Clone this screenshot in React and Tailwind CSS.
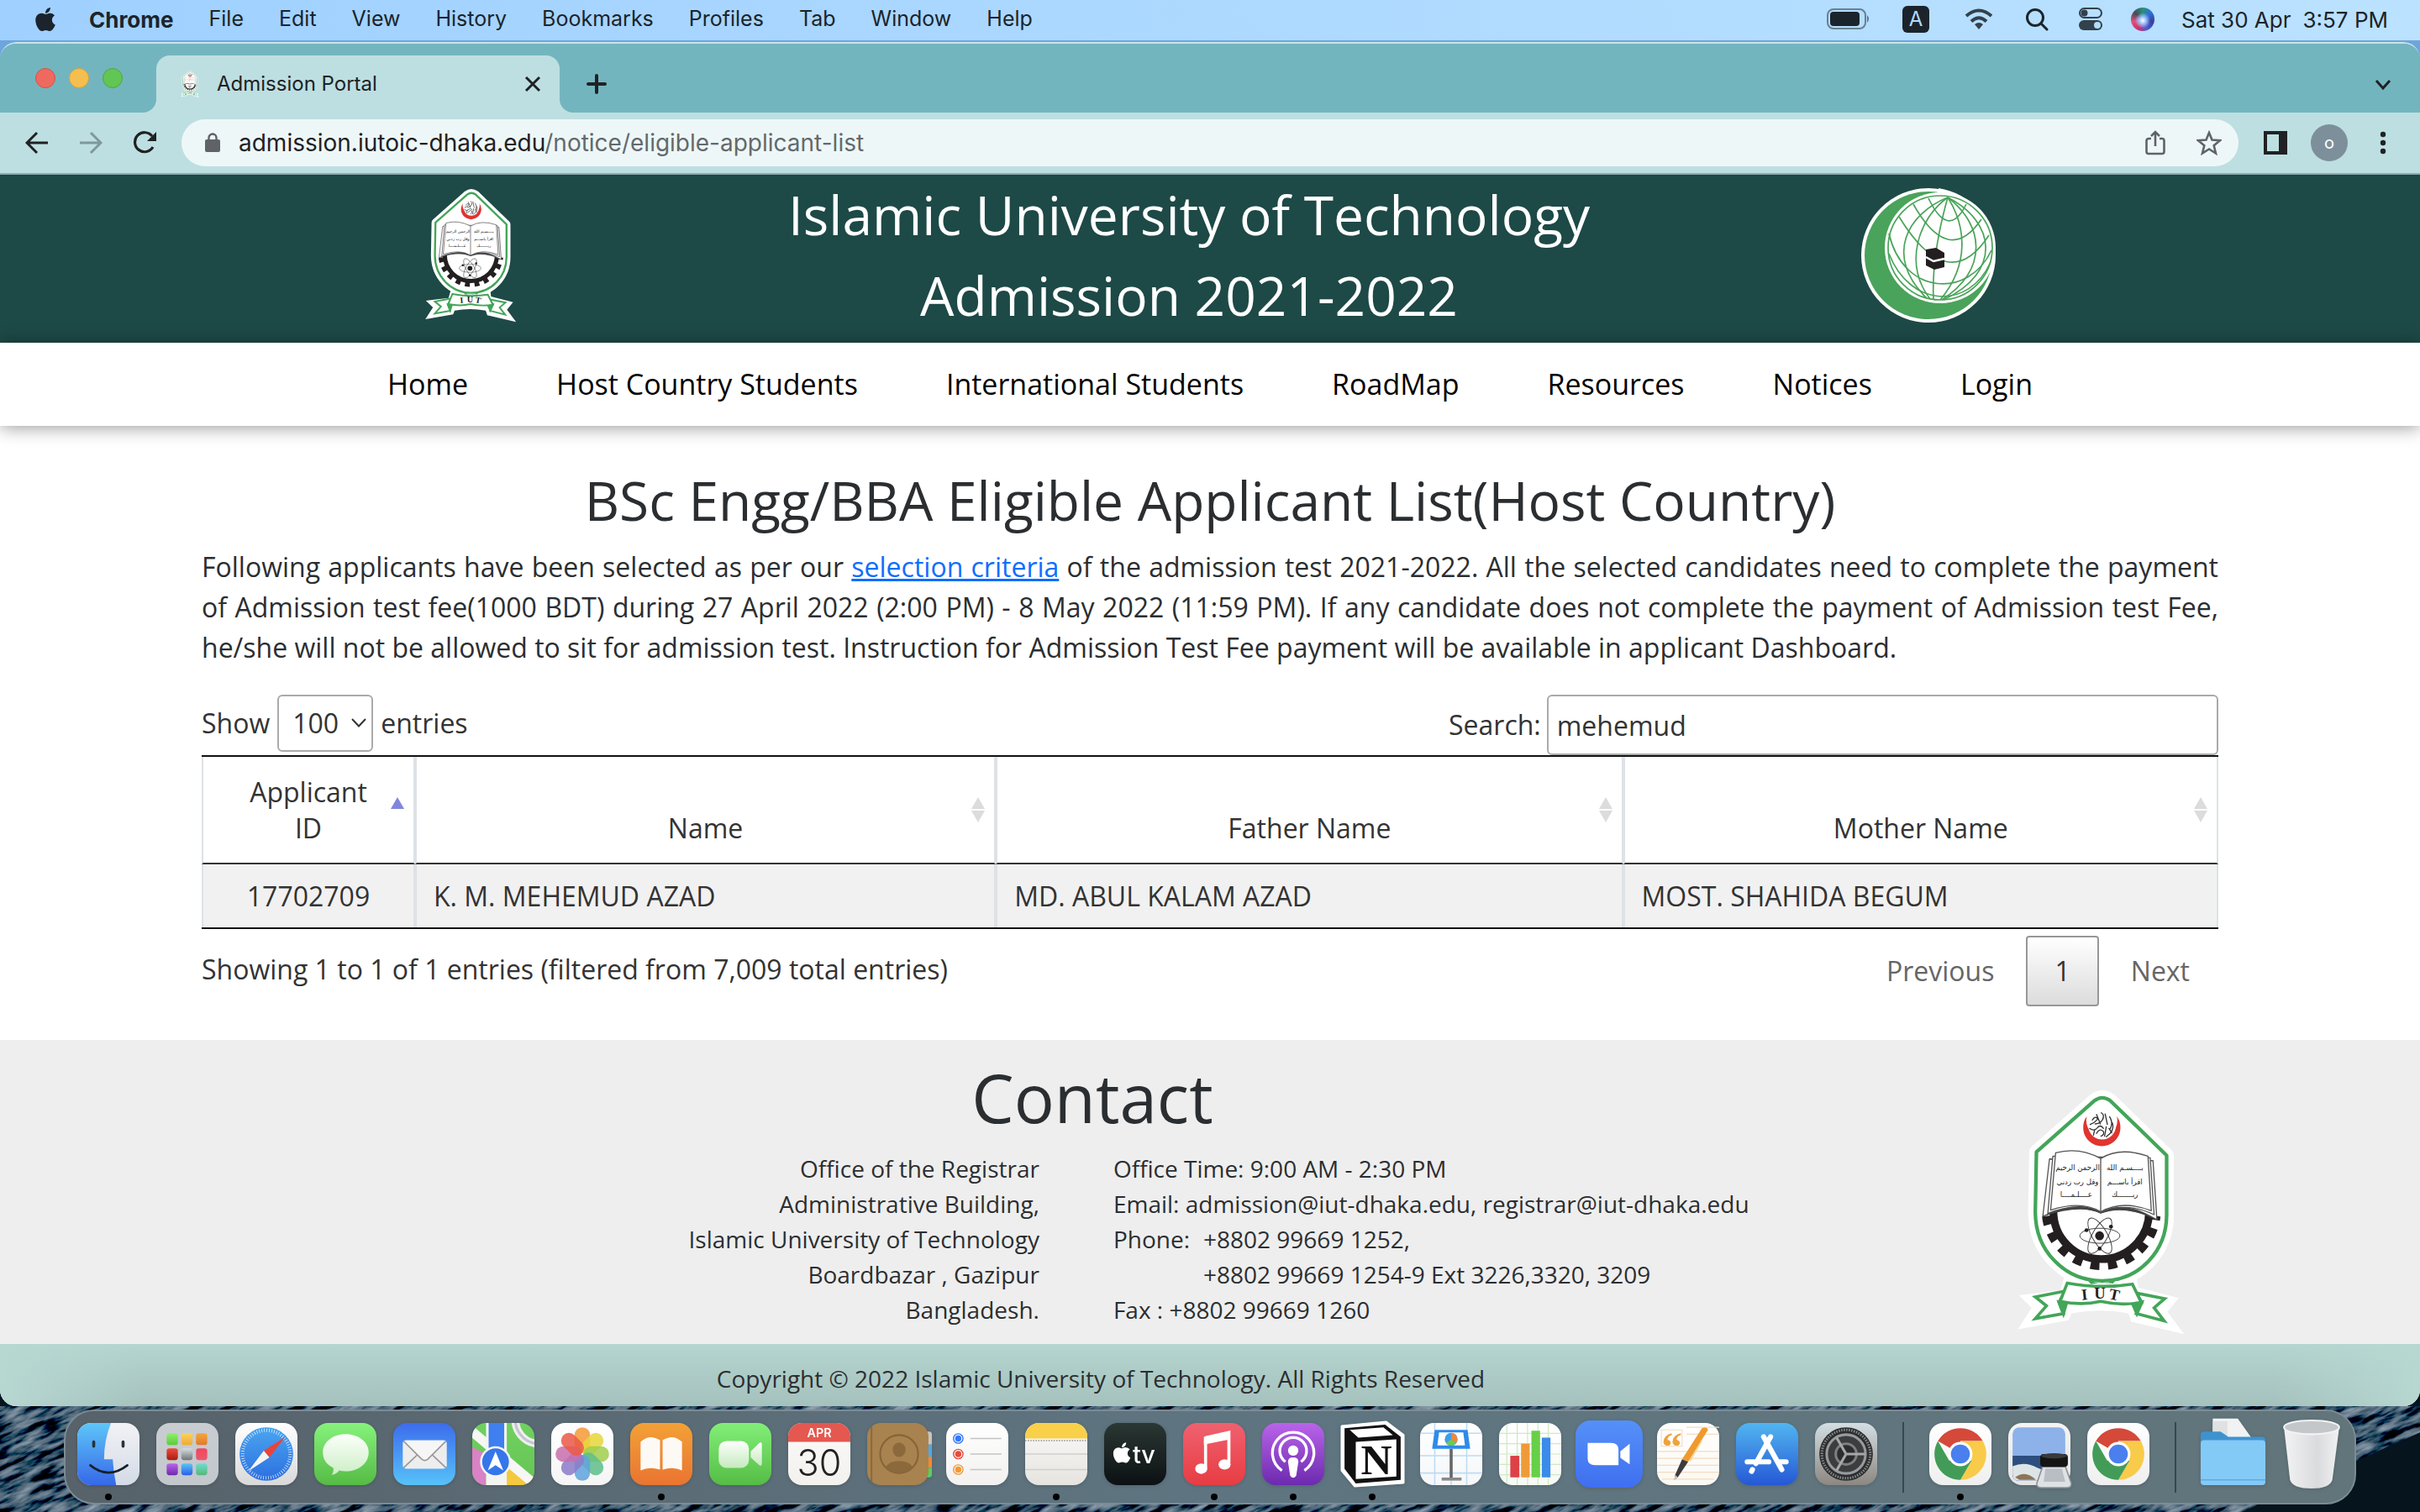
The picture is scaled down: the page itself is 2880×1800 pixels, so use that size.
import React from "react";
import { FaApple } from "react-icons/fa";

const MENUS = ["File", "Edit", "View", "History", "Bookmarks", "Profiles", "Tab", "Window", "Help"];
const NAV = ["Home", "Host Country Students", "International Students", "RoadMap", "Resources", "Notices", "Login"];

/* ---------- University emblem ---------- */
function Emblem({ className }) {
  const shield =
    "M338 90 Q365 70 394 90 L597 287 L597 500 C597 630 500 738 365 738 C230 738 125 630 125 490 L129 275 Z";
  return (
    <svg viewBox="58 48 604 886" className={className} role="img" aria-label="IUT emblem">
      <path d={shield} fill="#fff" stroke="#fff" strokeWidth="52" strokeLinejoin="round" />
      <path
        d="M230 720 L215 772 L66 790 L112 835 L62 912 L245 880 L255 855 Q360 835 460 855 L470 885 L660 930 L600 850 L640 800 L495 762 L490 720 Z"
        fill="#fff"
      />
      <path d={shield} fill="#fff" stroke="#43a559" strokeWidth="13" strokeLinejoin="round" />
      <path fill="#e0342f" d="M310 147 A67 67 0 1 0 418 147 A56 56 0 1 1 310 147 Z" />
      <circle cx="365" cy="180" r="50" fill="#fff" />
      <g fill="none" stroke="#333" strokeWidth="4" strokeLinecap="round">
        <path d="M330 160 q10 -18 20 -4 q-12 14 -28 20 M345 140 l14 34 M362 134 q14 8 4 26 q-10 14 -26 14 M376 138 l8 38 M392 148 q14 22 2 44 M320 190 q16 12 28 -2 q10 -14 22 2 M345 208 q10 -20 24 -8 q6 12 -8 18 M380 184 l-6 34 M402 170 q10 28 -22 50 M338 196 l-4 18 M390 190 l10 16" />
      </g>
      {/* gear */}
      <g fill="none" stroke="#231f20">
        <path d="M190 488 A172 172 0 0 0 534 488" strokeWidth="28" />
        <path d="M165 505 A198 198 0 0 0 559 505" strokeWidth="32" strokeDasharray="32 31" strokeDashoffset="0" />
      </g>
      {/* atom */}
      <g fill="none" stroke="#444" strokeWidth="3">
        <ellipse cx="357" cy="576" rx="72" ry="27" />
        <ellipse cx="357" cy="576" rx="72" ry="27" transform="rotate(60 357 576)" />
        <ellipse cx="357" cy="576" rx="72" ry="27" transform="rotate(120 357 576)" />
      </g>
      <g fill="#231f20">
        <circle cx="356" cy="576" r="16" />
        <circle cx="309" cy="556" r="7" />
        <circle cx="397" cy="543" r="7" />
        <circle cx="356" cy="622" r="7" />
      </g>
      {/* book */}
      <g fill="#fff" stroke="#555" strokeWidth="4" strokeLinejoin="round">
        <path d="M176 300 L152 506 Q270 455 360 494 Q450 462 562 518 L548 306 Z" />
        <path d="M188 290 L170 496 Q280 452 360 492 Q450 452 552 500 L538 296 Z" />
        <path d="M198 278 L180 484 Q290 448 360 490 Q440 446 542 486 L530 290 Q430 255 360 298 Q280 255 198 278 Z" />
        <path d="M360 298 V490" fill="none" />
      </g>
      <path d="M152 506 Q290 440 360 494 Q440 440 562 518 Q440 462 360 496 Q290 462 152 506Z" fill="#444" />
      <g fill="#222" fontFamily="'DejaVu Sans', sans-serif" fontSize="26" textAnchor="middle">
        <text x="277" y="340">الرحمن الرحيم</text>
        <text x="447" y="340">بــــسـم الله</text>
        <text x="277" y="390">وقل رب زدني</text>
        <text x="447" y="390">اقرأ باســـم</text>
        <text x="272" y="438">عــــلـمــــا</text>
        <text x="447" y="438">ربـــــــك</text>
      </g>
      {/* ribbon */}
      <g stroke="#43a559" strokeWidth="11" strokeLinejoin="miter">
        <path fill="#fff" d="M232 775 L125 796 L165 828 L125 874 L226 856 L210 815 Z" />
        <path fill="#fff" d="M488 782 L590 802 L552 835 L588 882 L488 856 L508 815 Z" />
        <path fill="#43a559" d="M210 815 L236 822 L226 856 Z M508 815 L476 824 L490 856 Z" />
        <path fill="#fff" d="M240 746 Q360 768 474 750 L506 816 Q430 828 360 812 Q290 828 214 812 Z" />
      </g>
      <path d="M310 733 Q365 760 415 733 L405 748 Q365 742 325 750 Z" fill="#43a559" />
      <g fill="#231f20" fontFamily="'Liberation Serif', serif" fontWeight="bold" fontSize="56" textAnchor="middle">
        <text x="302" y="806" transform="rotate(-6 302 790)">I</text>
        <text x="357" y="802">U</text>
        <text x="409" y="806" transform="rotate(12 409 790)">T</text>
      </g>
    </svg>
  );
}

function GlobeLogo({ className }) {
  return (
    <svg viewBox="0 0 160 160" className={className} role="img" aria-label="OIC logo">
      <circle cx="80" cy="80" r="80" fill="#fff" />
      <circle cx="80" cy="80" r="76" fill="#4aa35a" />
      <circle cx="94" cy="71" r="66" fill="#fff" />
      <path d="M92 4 Q125 6 146 34 L156 66 L160 80 A80 80 0 0 0 92 0 Z" fill="#fff" />
      <g fill="none" stroke="#4aa35a" strokeWidth="1.7">
        <circle cx="94" cy="71" r="62" />
        <path d="M80 12 Q104 62 125 19" />
        <path d="M62 19 Q104 94 143 37" />
        <path d="M45 34 Q104 130 152 56" />
        <path d="M33 54 C50 128 128 132 155 74" />
        <path d="M33 78 C58 142 128 146 154 88" />
        <path d="M103 11 C56 30 26 80 78 131" />
        <path d="M103 11 C68 36 50 90 82 132" />
        <path d="M103 11 C92 50 84 90 86 133" />
        <path d="M103 11 C124 44 130 90 94 133" />
        <path d="M103 11 C146 44 152 96 96 133" />
        <path d="M103 11 C160 40 168 100 98 133" />
      </g>
      <path d="M77 73 L89 71 L99 77 V94 L87 97 L77 92 Z" fill="#231f20" />
      <path d="M77 82 L86 87 L99 84" fill="none" stroke="#fff" strokeWidth="2.5" />
    </svg>
  );
}

/* ---------- macOS menu bar ---------- */
function MenuBar() {
  return (
    <header className="flex h-12 items-center justify-between bg-linear-to-r from-[#9fd0ff] to-[#bbe2ff] pr-[38px] pb-0.5 pl-[38px] text-[26px] text-[#1b242c]">
      <nav aria-label="Application menu" className="flex items-center">
        <button aria-label="Apple menu" className="w-[68px]">
          <FaApple size={32} />
        </button>
        <div className="flex items-center gap-[42px]">
          <button className="font-bold">Chrome</button>
          {MENUS.map((m) => (
            <button key={m} className="text-[25px]">
              {m}
            </button>
          ))}
        </div>
      </nav>
      <div className="flex items-center">
        <svg width="52" height="26" viewBox="0 0 52 26" className="mr-[38px]">
          <rect x="1" y="1" width="45" height="23" rx="7" fill="none" stroke="#1b242c" strokeOpacity=".5" strokeWidth="2" />
          <rect x="4" y="4" width="35" height="17" rx="4" fill="#1b242c" />
          <path d="M48 8 q4 4 0 9z" fill="#1b242c" fillOpacity=".6" />
        </svg>
        <span className="mr-[42px] flex h-8 w-8 items-center justify-center rounded-md bg-[#1b242c] text-2xl text-[#b4dcfc]">A</span>
        <svg width="34" height="26" viewBox="0 0 34 26" fill="none" stroke="#33414c" strokeWidth="4" className="mr-[38px]">
          <path d="M2 9 Q17 -4 32 9" />
          <path d="M8 15.500 Q17 7 26 15.500" />
          <path d="M17 25 L12 19 Q17 15 22 19Z" fill="#33414c" stroke="none" />
        </svg>
        <svg width="28" height="28" viewBox="0 0 28 28" fill="none" stroke="#1b242c" strokeWidth="3" strokeLinecap="round" className="mr-[36px]">
          <circle cx="12" cy="12" r="9.500" />
          <path d="M19 19 L26 26" />
        </svg>
        <svg width="28" height="28" viewBox="0 0 28 28" className="mr-[34px]">
          <rect x="1" y="1" width="26" height="11" rx="5.500" fill="none" stroke="#33414c" strokeWidth="2" />
          <circle cx="6.500" cy="6.500" r="4" fill="#33414c" />
          <rect y="15" width="28" height="12" rx="6" fill="#33414c" />
          <circle cx="22" cy="21" r="4" fill="#b4dcfc" />
        </svg>
        <span className="mr-8 h-7 w-7 rounded-full bg-[radial-gradient(circle_at_50%_55%,#fff_0%,#9fc8ff_18%,transparent_45%),conic-gradient(#2a8f7a,#2f6fd8,#3b3f9c,#4a5bd0,#d0306c,#e0507c,#4a4a58,#2a8f7a)]" />
        <span className="flex gap-3.5">
          <span>Sat 30 Apr</span>
          <span>3:57 PM</span>
        </span>
      </div>
    </header>
  );
}

/* ---------- Browser chrome ---------- */
function TabStrip() {
  return (
    <div className="flex h-[82px] items-end bg-[#73b5bf] pr-[34px]">
      <div className="flex w-[186px] gap-4 self-center pl-[42px]">
        <button aria-label="Close window" className="h-6 w-6 rounded-full border border-[#d35347] bg-[#ee6a5f]" />
        <button aria-label="Minimise window" className="h-6 w-6 rounded-full border border-[#d8a13c] bg-[#f5bf4f]" />
        <button aria-label="Zoom window" className="h-6 w-6 rounded-full border border-[#4fa73c] bg-[#61c654]" />
      </div>
      <svg width="16" height="16" className="-ml-4" viewBox="0 0 16 16">
        <path d="M16 0 A16 16 0 0 1 0 16 H16Z" fill="#bddfe1" />
      </svg>
      <div className="flex h-[68px] w-[480px] items-center rounded-t-2xl bg-[#bddfe1] pr-[22px] pl-6">
        <Emblem className="mr-4 h-8 w-8" />
        <span className="flex-1 text-2xl text-[#202124]">Admission Portal</span>
        <button aria-label="Close tab">
          <svg width="20" height="20" viewBox="0 0 20 20" stroke="#202124" strokeWidth="3">
            <path d="M2 2 L18 18 M18 2 L2 18" />
          </svg>
        </button>
      </div>
      <svg width="16" height="16" viewBox="0 0 16 16">
        <path d="M0 0 A16 16 0 0 0 16 16 H0Z" fill="#bddfe1" />
      </svg>
      <button aria-label="New tab" className="mb-[22px] ml-4">
        <svg width="24" height="24" viewBox="0 0 24 24" stroke="#202124" strokeWidth="4" strokeLinecap="round">
          <path d="M12 2 V22 M2 12 H22" />
        </svg>
      </button>
      <button aria-label="Search tabs" className="mb-[26px] ml-auto">
        <svg width="20" height="14" viewBox="0 0 20 14" fill="none" stroke="#202124" strokeWidth="3">
          <path d="M2 2 L10 11 L18 2" />
        </svg>
      </button>
    </div>
  );
}

function Toolbar() {
  return (
    <div className="flex h-[74px] items-center border-b-2 border-[#8fabad] bg-[#bddfe1] pr-10 pl-[30px]">
      <button aria-label="Back" className="mr-9">
        <svg width="28" height="28" viewBox="0 0 28 28" fill="none" stroke="#202124" strokeWidth="3">
          <path d="M27 14 H3 M14 2 L2 14 L14 26" />
        </svg>
      </button>
      <button aria-label="Forward" className="mr-9">
        <svg width="28" height="28" viewBox="0 0 28 28" fill="none" stroke="#7f989b" strokeWidth="3">
          <path d="M1 14 H25 M14 2 L26 14 L14 26" />
        </svg>
      </button>
      <button aria-label="Reload" className="mr-[28px]">
        <svg width="30" height="28" viewBox="0 0 30 28" fill="none">
          <path d="M24 19 A11.500 11.500 0 1 1 23 6" stroke="#202124" strokeWidth="3.200" />
          <path d="M28 1 V12 H17 Z" fill="#202124" />
        </svg>
      </button>
      <div className="flex h-14 flex-1 items-center rounded-full bg-[#eef7f8] pr-5 pl-7">
        <svg width="18" height="24" viewBox="0 0 18 24" className="mr-[22px]">
          <rect y="8" width="18" height="15" rx="2" fill="#5f6368" />
          <path d="M4.500 9 V6 a4.500 4.500 0 0 1 9 0 V9" fill="none" stroke="#5f6368" strokeWidth="2.400" />
        </svg>
        <p className="flex-1 text-[28px] text-[#202124]">
          admission.iutoic-dhaka.edu<span className="text-[#63696c]">/notice/eligible-applicant-list</span>
        </p>
        <button aria-label="Share" className="mr-[37px]">
          <svg width="24" height="30" viewBox="0 0 24 30" fill="none" stroke="#5f6368" strokeWidth="2.600">
            <path d="M7 10 H4 a2.500 2.500 0 0 0 -2.500 2.500 V25.500 A2.500 2.500 0 0 0 4 28 H20 a2.500 2.500 0 0 0 2.500 -2.500 V12.500 A2.500 2.500 0 0 0 20 10 H17 M12 19 V2 M7 7 L12 2 L17 7" />
          </svg>
        </button>
        <button aria-label="Bookmark this tab">
          <svg width="30" height="30" viewBox="0 0 30 30" fill="none" stroke="#5f6368" strokeWidth="2.600">
            <path d="M15 3 L18.500 11.500 L28 12.200 L20.700 18.200 L23 27.500 L15 22.500 L7 27.500 L9.300 18.200 L2 12.200 L11.500 11.500 Z" />
          </svg>
        </button>
      </div>
      <button aria-label="Side panel" className="ml-[30px]">
        <svg width="28" height="28" viewBox="0 0 28 28">
          <path d="M0 0 H28 V28 H0Z M4 4 V24 H18 V4Z" fill="#202124" fillRule="evenodd" />
        </svg>
      </button>
      <button aria-label="Profile" className="ml-7 h-11 w-11 rounded-full bg-[#7d8f9b] text-xl text-white">o</button>
      <button aria-label="Chrome menu" className="ml-[38px]">
        <svg width="8" height="28" viewBox="0 0 8 28" fill="#202124">
          <circle cx="4" cy="4" r="3.200" />
          <circle cx="4" cy="14" r="3.200" />
          <circle cx="4" cy="24" r="3.200" />
        </svg>
      </button>
    </div>
  );
}

/* ---------- Web page ---------- */
function SortIcon({ active }) {
  return (
    <svg width="18" height="32" viewBox="0 0 18 32" className="absolute top-1/2 right-2.5 -mt-4">
      <path d="M9 1 L17 15 H1Z" fill={active ? "#8186dd" : "#dcdcdc"} />
      {!active && <path d="M9 31 L17 17 H1Z" fill="#dcdcdc" />}
    </svg>
  );
}

const COLS = [
  { label: "Applicant ID", active: true },
  { label: "Name" },
  { label: "Father Name" },
  { label: "Mother Name" },
];

function ApplicantTable() {
  return (
    <table className="w-full table-fixed border-separate border-spacing-0 border-t-2 border-b-2 border-[#111] leading-[43px]">
      <colgroup>
        <col className="w-[254px]" />
        <col className="w-[28.8%]" />
        <col className="w-[31.1%]" />
        <col />
      </colgroup>
      <thead>
        <tr>
          {COLS.map((c) => (
            <th
              key={c.label}
              className="relative border-r-2 border-b-2 border-l-2 border-r-[#dee2e6] border-b-[#333] border-l-[#dee2e6] px-9 py-5 text-center align-bottom font-normal"
            >
              {c.label}
              <SortIcon active={c.active} />
            </th>
          ))}
        </tr>
      </thead>
      <tbody>
        <tr className="bg-[#f1f1f1]">
          <td className="border-x-2 border-[#dee2e6] px-5 py-4 text-center">17702709</td>
          <td className="border-x-2 border-[#dee2e6] px-5 py-4">K. M. MEHEMUD AZAD</td>
          <td className="border-x-2 border-[#dee2e6] px-5 py-4">MD. ABUL KALAM AZAD</td>
          <td className="border-x-2 border-[#dee2e6] px-5 py-4">MOST. SHAHIDA BEGUM</td>
        </tr>
      </tbody>
    </table>
  );
}

function WebPage() {
  return (
    <div className="flex flex-1 flex-col bg-white font-['Open_Sans',sans-serif] text-[#212529]">
      <header className="flex h-[200px] items-start justify-between bg-[#1d4946] px-[505px] text-white">
        <Emblem className="mt-4 h-40 w-[110px]" />
        <h1 className="text-center text-[64px] leading-[96px]">
          Islamic University of Technology
          <br />
          Admission 2021-2022
        </h1>
        <GlobeLogo className="mt-4 h-40 w-40" />
      </header>
      <nav aria-label="Site" className="relative flex h-[99px] items-center justify-center gap-[105px] bg-white text-[34px] text-black shadow-[0_2px_20px_rgba(0,0,0,0.4)]">
        {NAV.map((n) => (
          <a key={n} href="#">
            {n}
          </a>
        ))}
      </nav>

      <main className="flex-1 px-60 pt-[50px] pb-10 text-[32px] leading-[48px] text-[#2b2e31]">
        <h2 className="mb-[17px] text-center text-[64px] leading-[77px]">BSc Engg/BBA Eligible Applicant List(Host Country)</h2>
        <p className="mb-8 text-justify">
          Following applicants have been selected as per our{" "}
          <a href="#" className="text-[#0d6efd] underline">
            selection criteria
          </a>{" "}
          of the admission test 2021-2022. All the selected candidates need to complete the payment of Admission test
          fee(1000 BDT) during 27 April 2022 (2:00 PM) - 8 May 2022 (11:59 PM). If any candidate does not complete the
          payment of Admission test Fee, he/she will not be allowed to sit for admission test. Instruction for Admission
          Test Fee payment will be available in applicant Dashboard.
        </p>
        <div className="flex items-start justify-between text-[#333]">
          <div className="flex items-center gap-[9px]">
            <label htmlFor="length">Show</label>
            <span className="relative inline-flex items-center">
              <select
                id="length"
                defaultValue="100"
                className="h-[68px] w-[114px] appearance-none rounded-md border-2 border-[#aaa] bg-white pl-4"
              >
                <option value="100">100</option>
              </select>
              <svg width="18" height="12" viewBox="0 0 18 12" fill="none" stroke="#333" strokeWidth="2" className="pointer-events-none absolute right-2">
                <path d="M1 1 L9 9.500 L17 1" />
              </svg>
            </span>
            <label htmlFor="length">entries</label>
          </div>
          <div className="flex w-[916px] items-center gap-[7px]">
            <label htmlFor="search">Search:</label>
            <input id="search" defaultValue="mehemud" className="h-[72px] min-w-0 flex-1 rounded-md border-2 border-[#aaa] bg-white px-2.5" />
          </div>
        </div>
        <div className="text-[#333]">
          <ApplicantTable />
          <div className="flex items-start justify-between">
            <p className="pt-6">Showing 1 to 1 of 1 entries (filtered from 7,009 total entries)</p>
            <div className="mt-2 flex gap-1">
              <button className="rounded border-2 border-transparent px-8 py-4 text-[#666]">Previous</button>
              <button className="rounded border-2 border-[#979797] bg-linear-to-b from-white to-[#dcdcdc] px-8 py-4">1</button>
              <button className="rounded border-2 border-transparent px-8 py-4 text-[#666]">Next</button>
            </div>
          </div>
        </div>
      </main>

      <footer className="text-[28px] leading-[42px] text-[#2b2e31]">
        <div className="flex bg-[#eee] px-60">
          <div className="flex-1 py-5">
            <h2 className="mb-4 text-center text-[80px] leading-[96px]">Contact</h2>
            <div className="flex">
              <address className="w-[49.1%] pr-11 text-right not-italic">
                Office of the Registrar
                <br />
                Administrative Building,
                <br />
                Islamic University of Technology
                <br />
                Boardbazar , Gazipur
                <br />
                Bangladesh.
              </address>
              <div className="pl-11">
                <p>Office Time: 9:00 AM - 2:30 PM</p>
                <p>Email: admission@iut-dhaka.edu, registrar@iut-dhaka.edu</p>
                <div className="flex gap-4">
                  <p>Phone:</p>
                  <p>
                    +8802 99669 1252,
                    <br />
                    +8802 99669 1254-9 Ext 3226,3320, 3209
                  </p>
                </div>
                <p>Fax : +8802 99669 1260</p>
              </div>
            </div>
          </div>
          <div className="flex w-[280px] items-end justify-center pb-2.5">
            <Emblem className="h-[294px] w-[200px]" />
          </div>
        </div>
        <p className="bg-[#b5d5cf] bg-[linear-gradient(90deg,#b7d7d1,transparent_6%,transparent_94%,#b7d7d1),linear-gradient(#b5d5cf,#a5c1bd)] pt-5 pr-[260px] pb-3 text-center">
          Copyright © 2022 Islamic University of Technology. All Rights Reserved
        </p>
      </footer>
    </div>
  );
}

/* ---------- Dock ---------- */
function Icon({ children, bg, id, size = 74 }) {
  return (
    <svg width={size} height={size} viewBox="0 0 72 72" className="overflow-visible drop-shadow-sm">
      <defs>
        {bg && (
          <linearGradient id={"bg-" + id} x1="0" y1="0" x2="0" y2="1">
            <stop offset="0" stopColor={bg[0]} />
            <stop offset="1" stopColor={bg[1]} />
          </linearGradient>
        )}
        <clipPath id={"clip-" + id}>
          <rect width="72" height="72" rx="16" />
        </clipPath>
      </defs>
      {bg && <rect width="72" height="72" rx="16" fill={"url(#bg-" + id + ")"} />}
      {children}
    </svg>
  );
}

function Finder() {
  return (
    <Icon id="finder" bg={["#f2f2f5", "#d3dbe6"]}>
      <defs>
        <linearGradient id="fb" x1="0" y1="0" x2="0" y2="1">
          <stop offset="0" stopColor="#5ec6f8" />
          <stop offset="1" stopColor="#3668e8" />
        </linearGradient>
      </defs>
      <path clipPath="url(#clip-finder)" fill="url(#fb)" d="M0 0 H39 Q31 20 31 42 H41 Q42 58 45 72 H0Z" />
      <path d="M19 22 V27 M53 22 V27" stroke="#2a3138" strokeWidth="3.500" strokeLinecap="round" />
      <path d="M15 49 Q36 66 58 49" fill="none" stroke="#16202c" strokeWidth="2.600" strokeLinecap="round" />
    </Icon>
  );
}
function Launchpad() {
  const c = [
    ["#8ff06a", "#5cc93f"],
    ["#fbd25a", "#f0aa38"],
    ["#f5a63c", "#e07a2c"],
    ["#ee4a3c", "#a81d14"],
    ["#d5dde0", "#6f7679"],
    ["#f4455c", "#e85a72"],
    ["#bb63ee", "#6d2aa8"],
    ["#5cc4f8", "#2a5fe8"],
    ["#6fdcd0", "#55b878"],
  ];
  return (
    <Icon id="launch" bg={["#c9cdd2", "#c3c8cd"]}>
      {c.map(([a, b], i) => (
        <g key={a}>
          <linearGradient id={"lp" + i} x1="0" y1="0" x2="0" y2="1">
            <stop offset="0" stopColor={a} />
            <stop offset="1" stopColor={b} />
          </linearGradient>
          <rect x={12 + (i % 3) * 17} y={12 + Math.floor(i / 3) * 17.5} width="13" height="13.500" rx="3" fill={"url(#lp" + i + ")"} />
        </g>
      ))}
    </Icon>
  );
}
function Safari() {
  return (
    <Icon id="safari" bg={["#ffffff", "#d9d9d9"]}>
      <defs>
        <linearGradient id="sf" x1="0" y1="0" x2="0" y2="1">
          <stop offset="0" stopColor="#4aa5f0" />
          <stop offset="1" stopColor="#2c6fe0" />
        </linearGradient>
      </defs>
      <circle cx="36" cy="36" r="31" fill="url(#sf)" />
      <circle cx="36" cy="36" r="27.500" fill="none" stroke="#fff" strokeOpacity=".8" strokeWidth="4" strokeDasharray="0.800 2.080" />
      <path d="M58 16 L33 32 L39.500 40Z" fill="#e8443c" />
      <path d="M15 56 L33 32 L39.500 40Z" fill="#f4f4f4" />
    </Icon>
  );
}
function Messages() {
  return (
    <Icon id="msg" bg={["#86f27c", "#55bb45"]}>
      <linearGradient id="bubble" x1="0" y1="0" x2="0" y2="1">
        <stop offset="0" stopColor="#fbfffa" />
        <stop offset="1" stopColor="#cdeec6" />
      </linearGradient>
      <path d="M36 13 C51 13 63 22 63 34 C63 47 51 56 36 56 Q32 56 29 55 Q25 60 20 60 Q23 57 22 52 C14 48 10 42 10 34 C10 22 22 13 36 13Z" fill="url(#bubble)" />
    </Icon>
  );
}
function Mail() {
  return (
    <Icon id="mail" bg={["#3c6cec", "#57c2f9"]}>
      <rect x="11" y="20" width="51" height="33" rx="4" fill="#ededed" />
      <path d="M12 52 L31 34 M61 52 L42 34" stroke="#999" strokeWidth="1.600" />
      <path d="M12 21 L33 42 Q36.500 45 40 42 L61 21" fill="#f6f6f6" stroke="#999" strokeWidth="1.600" />
    </Icon>
  );
}
function Maps() {
  return (
    <Icon id="maps" bg={["#6fd15f", "#66c455"]}>
      <g clipPath="url(#clip-maps)">
        <path d="M0 28 L16 36 V72 H0Z" fill="#d982c5" />
        <path d="M36 72 L72 72 V66 L40 52Z" fill="#f4c83f" />
        <path d="M0 10 L76 74" stroke="#f6f6f4" strokeWidth="11" />
        <path d="M16 0 V72 H40 V0Z" fill="#f4f4f2" />
        <path d="M19 0 H37 V50 H19Z" fill="#3f7ff0" />
        <path d="M50 -6 A28 28 0 0 0 74 24" fill="none" stroke="#eee" strokeWidth="9" />
        <path d="M50 -6 A28 28 0 0 0 74 24" fill="none" stroke="#c2c5cf" strokeWidth="3" />
      </g>
      <circle cx="27" cy="45" r="18" fill="#f5f5f5" />
      <circle cx="27" cy="45" r="15.500" fill="#3577ea" />
      <path d="M27 33 L36 55 L27 49 L18 55Z" fill="#fff" />
    </Icon>
  );
}
function Photos() {
  const c = ["#f49a38", "#e8d63c", "#9fce4e", "#5fbf8c", "#5fa4dc", "#8d7cc8", "#c86fae", "#ea5a48"];
  return (
    <Icon id="photos" bg={["#ffffff", "#f5f5f5"]}>
      {c.map((f, i) => (
        <rect key={f} x="27" y="5" width="18" height="30" rx="9" fill={f} fillOpacity=".86" transform={"rotate(" + i * 45 + " 36 36)"} />
      ))}
    </Icon>
  );
}
function Books() {
  return (
    <Icon id="books" bg={["#f3a137", "#ea7430"]}>
      <path d="M12 22 Q22 12 34.500 20 V54 Q22 50 12 55Z" fill="#fdfaf5" />
      <path d="M60 22 Q50 12 37.500 20 V54 Q50 50 60 55Z" fill="#fdfaf5" />
    </Icon>
  );
}
function FaceTime() {
  return (
    <Icon id="ft" bg={["#82ee78", "#55bd45"]}>
      <linearGradient id="cam" x1="0" y1="0" x2="0" y2="1">
        <stop offset="0" stopColor="#fcfffb" />
        <stop offset="1" stopColor="#c6eabf" />
      </linearGradient>
      <rect x="11" y="21" width="35" height="31" rx="9" fill="url(#cam)" />
      <path d="M48 33 L58 23 Q61 21 61 25 V47 Q61 51 58 49 L48 40Z" fill="url(#cam)" />
    </Icon>
  );
}
function Calendar() {
  return (
    <Icon id="cal" bg={["#fbfaf8", "#f3f1ee"]}>
      <path clipPath="url(#clip-cal)" d="M0 0 H72 V22 H0Z" fill="#e4584f" />
      <text x="36" y="17" textAnchor="middle" fontSize="14" fontWeight="600" fill="#fff">APR</text>
      <text x="36" y="61" textAnchor="middle" fontSize="42" fontWeight="300" fill="#222">30</text>
    </Icon>
  );
}
function Contacts() {
  return (
    <Icon id="con">
      <path d="M66 10 h6 q3 0 3 4 V25 H66Z" fill="#c9c4bd" />
      <rect x="66" y="25" width="9" height="14" fill="#4fa8e6" />
      <rect x="66" y="39" width="9" height="13" fill="#ef8a35" />
      <path d="M66 52 h9 v8 q0 3 -4 3 h-5Z" fill="#58cf5e" />
      <rect width="71" height="72" rx="16" fill="#a8834f" />
      <path d="M5 4 V68" stroke="#8d6a3c" strokeWidth="2" />
      <circle cx="37" cy="36" r="22" fill="none" stroke="#866437" strokeWidth="2" />
      <ellipse cx="37" cy="31" rx="7.500" ry="8.500" fill="#8b693b" />
      <path d="M21 51 Q26 44 37 44 Q48 44 53 51 Q46 58 37 58 Q28 58 21 51Z" fill="#8b693b" />
    </Icon>
  );
}
function Reminders() {
  return (
    <Icon id="rem" bg={["#ffffff", "#f2f1f0"]}>
      {["#3478f6", "#e64c3c", "#f19a37"].map((f, i) => (
        <g key={f}>
          <circle cx="14" cy={18 + i * 18} r="5.500" fill="none" stroke={f} strokeWidth="1.400" />
          <circle cx="14" cy={18 + i * 18} r="3.600" fill={f} />
          <path d={"M28 " + (18 + i * 18) + " H64"} stroke="#c4c4c4" strokeWidth="1.600" />
        </g>
      ))}
    </Icon>
  );
}
function Notes() {
  return (
    <Icon id="notes" bg={["#fafafa", "#e6e4df"]}>
      <path clipPath="url(#clip-notes)" d="M0 0 H72 V18 H0Z" fill="#f8d04a" />
      <path d="M0 20.500 H72" stroke="#aaa" strokeWidth="2" strokeDasharray="1.500 1.500" />
      <path d="M0 36 H72 M0 54 H72" stroke="#cfcfcc" strokeWidth="1.500" />
    </Icon>
  );
}
function AppleTV() {
  return (
    <Icon id="tv" bg={["#2a3733", "#0c1113"]}>
      <FaApple size={27} x="7" y="21" color="#fff" />
      <text x="33" y="47" fontSize="28" fontWeight="500" fill="#fff">tv</text>
    </Icon>
  );
}
function Music() {
  return (
    <Icon id="music" bg={["#f0616f", "#e73c43"]}>
      <path d="M26 17 L53 11 V46" fill="none" stroke="#fff" strokeWidth="3.600" />
      <path d="M24 16 L54 10.500 V19 L24 25Z" fill="#fff" />
      <path d="M26 20 V52" stroke="#fff" strokeWidth="3.600" />
      <ellipse cx="21" cy="53" rx="7" ry="6" fill="#fff" />
      <ellipse cx="48" cy="48" rx="7" ry="6" fill="#fff" />
    </Icon>
  );
}
function Podcasts() {
  return (
    <Icon id="pod" bg={["#b964ea", "#6c2aae"]}>
      <g fill="none" stroke="#fff" strokeWidth="3.200">
        <path d="M23 55 A24 24 0 1 1 49 55" />
        <path d="M27 45 A15.500 15.500 0 1 1 45 45" />
      </g>
      <circle cx="36" cy="32" r="6" fill="#fff" />
      <path d="M30 45 Q30 40 36 40 Q42 40 42 45 L39.500 61 Q36 66 32.500 61Z" fill="#fff" />
    </Icon>
  );
}
function Notion() {
  return (
    <Icon id="notion">
      <path d="M1 4 L52 -1 L72 14 V69 L16 73 L1 55Z" fill="#fff" stroke="#fff" strokeWidth="3" strokeLinejoin="round" />
      <path d="M4 6 L51 2 L69 16 V66 L17 70 L4 53Z" fill="#111" />
      <path d="M10 8 L49 5 L60 14 L20 17Z" fill="#fff" />
      <path d="M17 22 L64 19 V62 L17 65Z" fill="#fff" />
      <text x="41" y="59" textAnchor="middle" fontFamily="'Liberation Serif', serif" fontWeight="bold" fontSize="50" fill="#111">N</text>
    </Icon>
  );
}
function Keynote() {
  return (
    <Icon id="key" bg={["#ffffff", "#f5f7f9"]}>
      <path clipPath="url(#clip-key)" d="M0 12 H72 M0 38 H72 M0 58 H72 M17 0 V72 M36 44 V72 M54 0 V72" stroke="#bcdcf3" strokeWidth="1.500" />
      <path d="M36 30 V64" stroke="#666" strokeWidth="3.500" />
      <path d="M25 65 H48" stroke="#8a8a8a" strokeWidth="3.500" />
      <path d="M17 8 H55 L58 30 H14Z" fill="#2f8ae8" />
      <path d="M22 11 H50 L52 26 H20Z" fill="#fff" />
      <circle cx="36" cy="19" r="7.500" fill="#3d9ee8" />
      <path d="M36 19 V11.500 A7.500 7.500 0 0 1 42 23Z" fill="#f0873a" />
      <path d="M36 19 L42 23 A7.500 7.500 0 0 1 30 23Z" fill="#6dca53" />
    </Icon>
  );
}
function Numbers() {
  return (
    <Icon id="num" bg={["#ffffff", "#f7f9f5"]}>
      <path clipPath="url(#clip-num)" d="M9 0 V72 M21 0 V72 M33 0 V72 M45 0 V72 M57 0 V72 M0 12 H72 M0 24 H72 M0 36 H72 M0 48 H72 M0 60 H72" stroke="#cdeac4" strokeWidth="1.200" />
      <rect x="13" y="38" width="10.500" height="25" fill="#dc4148" />
      <rect x="25.500" y="24" width="10" height="39" fill="#f09a37" />
      <rect x="37.500" y="9" width="10" height="54" fill="#67cf48" />
      <rect x="49.500" y="17" width="10" height="46" fill="#3a8bea" />
    </Icon>
  );
}
function Zoom() {
  return (
    <Icon id="zoom" bg={["#5591f8", "#3f6ff0"]} size={80}>
      <path d="M13 24 H38 Q46 24 46 31 V48 H21 Q13 48 13 41Z" fill="#fff" />
      <path d="M48 33 L58 25 V47 L48 40Z" fill="#fff" />
    </Icon>
  );
}
function Pages() {
  return (
    <Icon id="pages" bg={["#ffffff", "#fbf8f3"]}>
      <path d="M34 5 H72 M34 13 H72 M0 33 H72 M0 41 H72 M0 49 H72 M0 57 H72 M6 65 H66" stroke="#f3dcc0" strokeWidth="1.200" />
      <rect x="5" y="8" width="24" height="19" fill="none" stroke="#f3dcc0" />
      <text x="5" y="44" fontSize="48" fontFamily="'Liberation Serif', serif" fontWeight="bold" fill="#eea33c">“</text>
      <path d="M52 6 Q58 4 59 8 L36 45 L29 42Z" fill="#ef9a2d" />
      <path d="M29 42 L36 45 L24 63 L20 66 L21 60Z" fill="#3c3c3e" />
      <path d="M24 63 L20 66 L21 60Z" fill="#c8c8c8" />
      <path d="M52 20 L38 44" stroke="#fbd28c" strokeWidth="1.500" />
    </Icon>
  );
}
function AppStore() {
  return (
    <Icon id="store" bg={["#52b5f0", "#2558d6"]}>
      <g stroke="#fff" strokeWidth="6" strokeLinecap="round">
        <path d="M40 16 L23 47 M32 16 L53 54 M13 45 H38 M50 45 H58 M19 54 L18 56" />
      </g>
    </Icon>
  );
}
function Settings() {
  return (
    <Icon id="set" bg={["#d3dee3", "#8d8781"]}>
      <circle cx="36" cy="36" r="31" fill="#2b2d2e" />
      <circle cx="36" cy="36" r="28" fill="none" stroke="#85888a" strokeWidth="3" strokeDasharray="1.500 1.430" />
      <circle cx="36" cy="36" r="22.500" fill="#3b3d3e" stroke="#989b9d" strokeWidth="3" />
      <circle cx="36" cy="36" r="12" fill="#2b2d2e" stroke="#7d8082" strokeWidth="3" />
      <path d="M36 36 L25 17 M36 36 H58 M36 36 L25 55" stroke="#a5a8aa" strokeWidth="3" />
    </Icon>
  );
}
function Chrome({ id }) {
  return (
    <Icon id={id} bg={["#ffffff", "#efefef"]}>
      <path d="M36 36 L10 21 A30 30 0 0 1 62 21 L36 21Z" fill="#d5493a" />
      <path d="M36 21 H62 A30 30 0 0 1 36 66 L49 43.500Z" fill="#f9cb4a" />
      <path d="M10 21 A30 30 0 0 0 36 66 L49 43.500 H36 L23 43.500Z" fill="#429c57" />
      <circle cx="36" cy="36" r="14" fill="#fff" />
      <circle cx="36" cy="36" r="11" fill="#4a7fee" />
    </Icon>
  );
}
function Preview() {
  return (
    <Icon id="prev" bg={["#f4f4f4", "#e4e4e4"]}>
      <rect x="5" y="5" width="61" height="62" rx="8" fill="#8db2ea" />
      <path d="M5 38 H66 V59 Q66 67 58 67 H13 Q5 67 5 59Z" fill="#2c4f80" />
      <path d="M5 50 Q20 44 34 52 Q45 58 60 52 V60 Q60 67 54 67 H13 Q5 67 5 59Z" fill="#dde4e6" />
      <path d="M8 63 Q20 54 32 66 H13Z" fill="#8a7658" />
      <path d="M40 50 H66 L73 70 Q73 75 68 75 H38 Q33 75 33 70Z" fill="#dfe2e4" stroke="#8b9196" strokeWidth="1.500" />
      <path d="M43 53 H62 L66 68 H41Z" fill="#b8bec4" />
      <rect x="37" y="36" width="32" height="15" rx="4" fill="#151515" />
      <ellipse cx="53" cy="38" rx="15" ry="3" fill="#3a3a3a" />
    </Icon>
  );
}
function Folder() {
  return (
    <Icon id="folder">
      <path d="M13 -5 H42 L57 16 V30 H13Z" fill="#f1f2f3" />
      <path d="M13 -2 H30 V20 H13Z" fill="#dfe1e3" />
      <path d="M-1 14 Q-1 10 3 10 H22 L31 16 H70 Q74 16 74 20 V40 H-1Z" fill="#3e93cf" />
      <rect x="-1" y="20" width="75" height="52" rx="4" fill="#84caf7" />
      <path d="M-1 66 H74" stroke="#5dabdf" strokeWidth="1.500" />
    </Icon>
  );
}
function Trash() {
  return (
    <Icon id="trash">
      <linearGradient id="bin" x1="0" y1="0" x2="1" y2="0">
        <stop offset="0" stopColor="#f3f3f4" />
        <stop offset=".6" stopColor="#dadbde" />
        <stop offset="1" stopColor="#f1f1f2" />
      </linearGradient>
      <path d="M4 5 L11 66 Q14 76 36 76 Q57 76 60 66 L68 5Z" fill="url(#bin)" />
      <ellipse cx="36" cy="5" rx="32" ry="8" fill="#c3c7ca" stroke="#f2f3f4" strokeWidth="2" />
    </Icon>
  );
}

const APPS = [
  ["Finder", <Finder />, true],
  ["Launchpad", <Launchpad />],
  ["Safari", <Safari />],
  ["Messages", <Messages />],
  ["Mail", <Mail />],
  ["Maps", <Maps />],
  ["Photos", <Photos />],
  ["Books", <Books />, true],
  ["FaceTime", <FaceTime />],
  ["Calendar", <Calendar />],
  ["Contacts", <Contacts />],
  ["Reminders", <Reminders />],
  ["Notes", <Notes />, true],
  ["TV", <AppleTV />],
  ["Music", <Music />, true],
  ["Podcasts", <Podcasts />, true],
  ["Notion", <Notion />, true],
  ["Keynote", <Keynote />],
  ["Numbers", <Numbers />],
  ["Zoom", <Zoom />],
  ["Pages", <Pages />],
  ["App Store", <AppStore />],
  ["System Preferences", <Settings />],
];
const RECENT = [
  ["Google Chrome", <Chrome id="chrome-a" />, true],
  ["Preview", <Preview />],
  ["Chrome", <Chrome id="chrome-b" />],
];
const PLACES = [
  ["Downloads", <Folder />],
  ["Trash", <Trash />],
];

function DockGroup({ items }) {
  return items.map(([name, icon, running]) => (
    <button key={name} aria-label={name} className="flex h-full w-[94px] flex-col items-center pt-3.5">
      <span className="flex h-[74px] items-center">{icon}</span>
      {running && <span className="mt-2.5 h-2 w-2 rounded-full bg-black" />}
    </button>
  ));
}

function Separator() {
  return <span className="mx-5 h-[84px] w-0.5 self-center bg-[#37474f]" />;
}

function Dock() {
  return (
    <div className="relative flex h-[127px] justify-center overflow-hidden bg-[#05141d] pt-1">
      <svg className="absolute inset-0 h-full w-full" aria-hidden="true">
        <filter id="water" x="0" y="0" width="100%" height="100%">
          <feTurbulence type="fractalNoise" baseFrequency="0.03 0.14" numOctaves="4" seed="7" />
          <feColorMatrix values="0.7 0 0 0 -0.31  0.8 0 0 0 -0.31  0.9 0 0 0 -0.31  0 0 0 0 1" />
        </filter>
        <rect x="-200" y="-600" width="3400" height="1800" filter="url(#water)" transform="rotate(-24 0 0)" />
      </svg>
      <div className="relative flex h-[113px] items-center rounded-[36px] border-2 border-[#7c8b93] bg-linear-to-r from-[#57626a] via-[#5e7581] to-[#62757b] px-1">
        <DockGroup items={APPS} />
        <Separator />
        <DockGroup items={RECENT} />
        <Separator />
        <DockGroup items={PLACES} />
      </div>
    </div>
  );
}

export default function App() {
  return (
    <div className="flex min-h-screen flex-col font-[Inter,sans-serif]">
      <MenuBar />
      <div className="flex flex-1 flex-col bg-[linear-gradient(#6ea5dc_50%,#05141d_50%)] pt-0.5">
        <div className="flex flex-1 flex-col overflow-hidden rounded-[20px] border-t-2 border-[#c9e4e7]">
          <TabStrip />
          <Toolbar />
          <WebPage />
        </div>
      </div>
      <Dock />
    </div>
  );
}
